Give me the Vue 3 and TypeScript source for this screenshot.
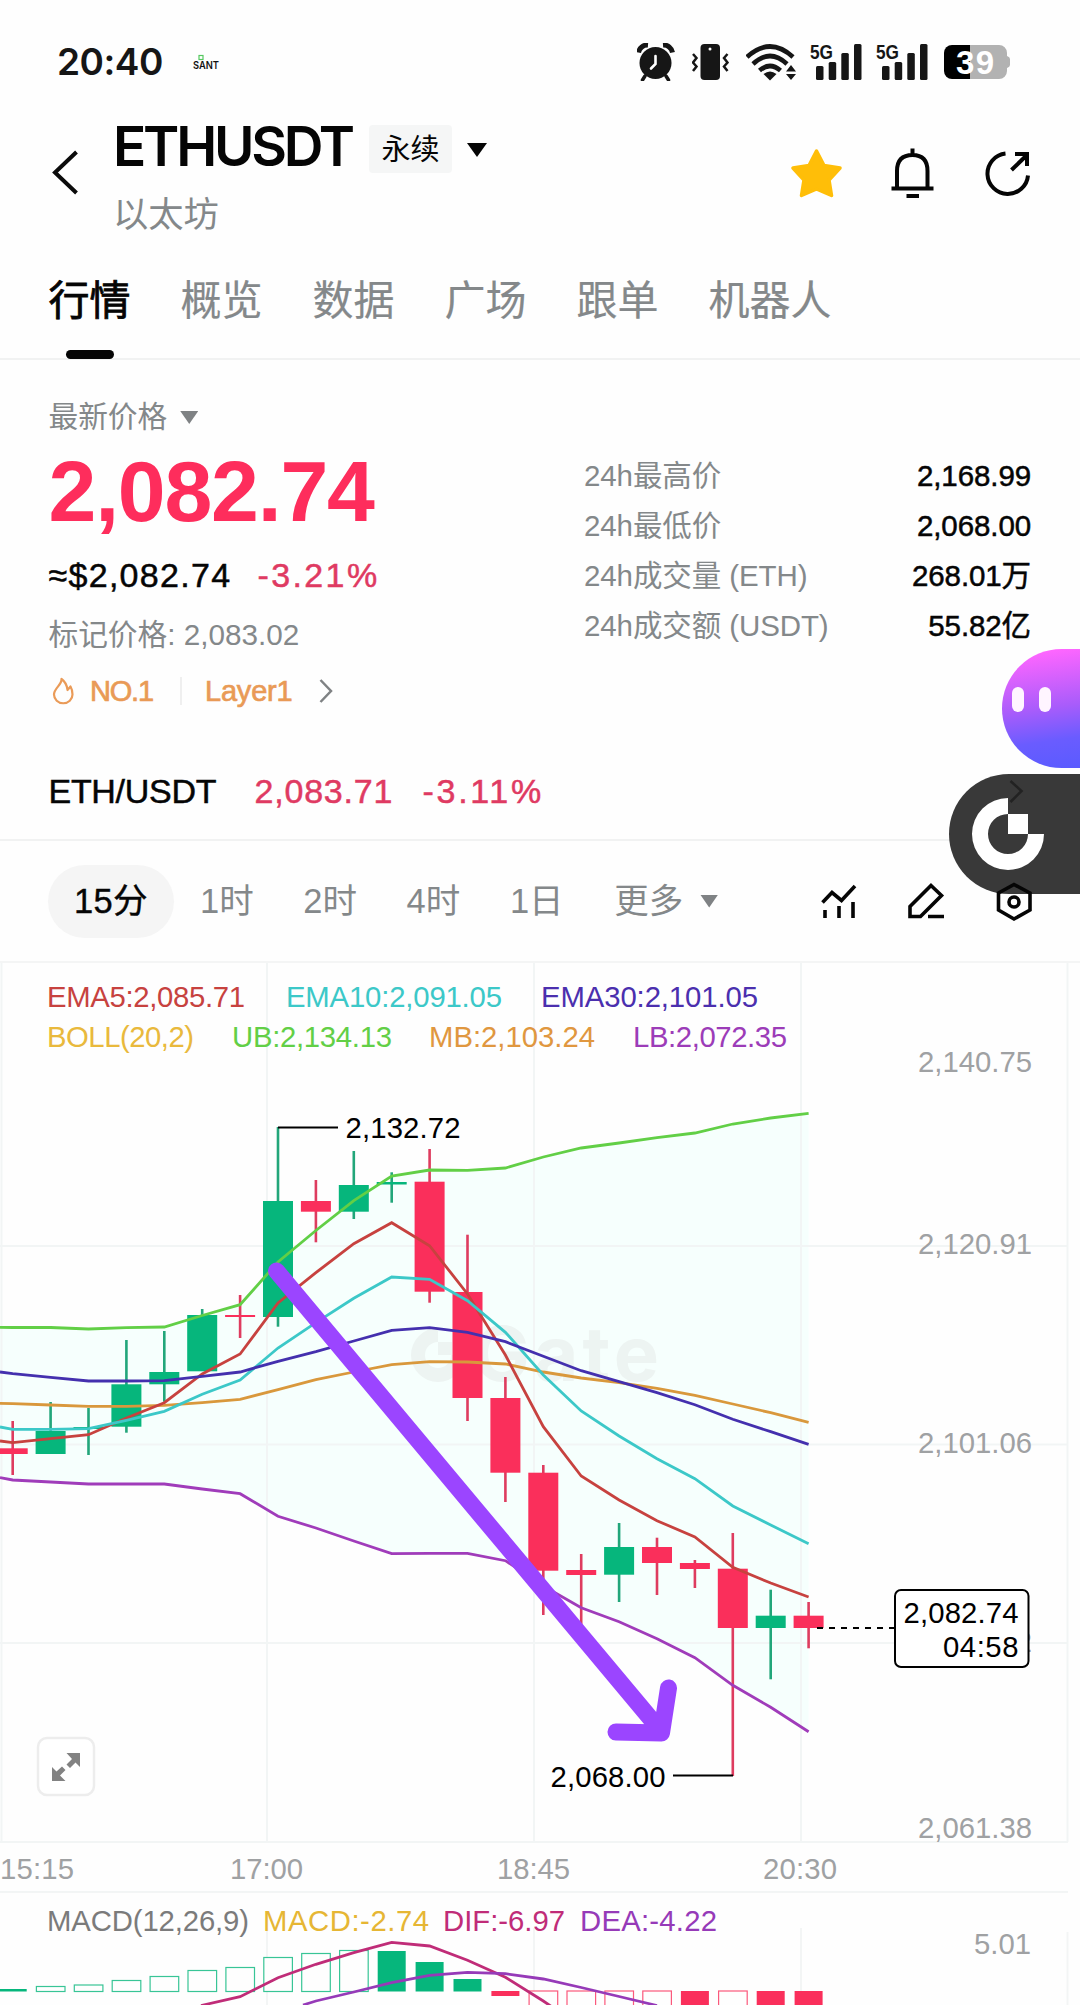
<script setup lang="ts">
interface Candle { up: boolean; top: number; bottom: number; high: number; low: number }
interface Label { text: string; x: number; y: number; w: number; color: string }

const X0 = 12.7
const STEP = 37.9
const cx = (i: number): number => X0 + STEP * i

const raw: [number, number, number, number, number][] = [
  [0, 1448.3, 1454, 1421, 1475],
  [1, 1431, 1454, 1402, 1454],
  [1, 1427, 1429, 1408, 1455],
  [1, 1384.3, 1426.7, 1340, 1432.7],
  [1, 1372, 1384.3, 1331, 1401.7],
  [1, 1315, 1371.3, 1309, 1371],
  [0, 1315, 1317, 1295, 1338],
  [1, 1201, 1317, 1127, 1326.7],
  [0, 1201, 1211.7, 1180, 1242.3],
  [1, 1185, 1211.7, 1151, 1219],
  [1, 1182, 1184.5, 1172.3, 1202.7],
  [0, 1181.7, 1291.7, 1149, 1302.7],
  [0, 1292, 1398, 1234.7, 1421],
  [0, 1398, 1472.7, 1377, 1502],
  [0, 1472.7, 1570.7, 1465, 1615],
  [0, 1570, 1575, 1554, 1627],
  [1, 1547, 1574.7, 1523, 1602],
  [0, 1547, 1563, 1537.7, 1595],
  [0, 1563, 1569, 1560, 1588],
  [0, 1568.7, 1628, 1533, 1776],
  [1, 1615.7, 1628, 1589.7, 1679.3],
  [0, 1615.7, 1628, 1602, 1648.3],
]
const candles: Candle[] = raw.map(([u, top, bottom, high, low]) => ({ up: u === 1, top, bottom, high, low }))

// first value is the level at the left edge, the rest follow the candles
const ub = [1327.3, 1327.5, 1327.5, 1329, 1327.7, 1327, 1315.5, 1304.7, 1262, 1230.5, 1200.7, 1176, 1170, 1170.3, 1168, 1157, 1148, 1143, 1137.7, 1133, 1124, 1118, 1113.3]
const ema5 = [1441, 1442.7, 1438.7, 1434.7, 1418, 1402.7, 1374, 1354, 1303, 1272.7, 1243.7, 1222.7, 1245.7, 1294, 1355, 1426.7, 1476, 1500, 1520.7, 1537, 1567.3, 1583, 1597]
const ema10 = [1427, 1429.3, 1429.3, 1428.7, 1420.3, 1411.3, 1394.3, 1380, 1348, 1322.7, 1298.3, 1277, 1279.3, 1300.7, 1332.3, 1375, 1411, 1436, 1458.7, 1478.7, 1506, 1525, 1543.7]
const ema30 = [1372, 1373.7, 1377.3, 1381, 1381, 1380.7, 1376.3, 1372, 1361.3, 1351.7, 1341, 1330.3, 1327.7, 1332.3, 1341.7, 1356.3, 1370.7, 1381.7, 1392.7, 1404.7, 1419.3, 1431.7, 1444.3]
const mb = [1403.3, 1403.7, 1405, 1406.3, 1406.3, 1405.3, 1402.7, 1399.3, 1389.7, 1379.7, 1372, 1364.7, 1361.7, 1362, 1364, 1372, 1378, 1382.7, 1388.3, 1395.3, 1404, 1412.7, 1422.3]
const lb = [1477.7, 1480, 1482, 1484, 1484, 1484, 1489, 1493.7, 1516.3, 1528, 1541, 1553.7, 1553.3, 1553.3, 1560.7, 1586, 1607.7, 1621.7, 1638.7, 1657.7, 1685.3, 1707.3, 1731.7]

const toPoints = (v: number[]): string[] => v.map((y, i) => `${i === 0 ? 0 : cx(i - 1).toFixed(1)},${y}`)
const band = [...toPoints(ub), ...toPoints(lb).reverse()].join(' ')
const lines = [
  { color: '#a03cba', pts: toPoints(lb).join(' ') },
  { color: '#d9983c', pts: toPoints(mb).join(' ') },
  { color: '#62cf46', pts: toPoints(ub).join(' ') },
  { color: '#c7423f', pts: toPoints(ema5).join(' ') },
  { color: '#3cc8c8', pts: toPoints(ema10).join(' ') },
  { color: '#4430ae', pts: toPoints(ema30).join(' ') },
]

const labels: Label[] = [
  { text: 'EMA5:2,085.71', x: 47, y: 1007, w: 198, color: '#c7423f' },
  { text: 'EMA10:2,091.05', x: 286, y: 1007, w: 216, color: '#3cc8c8' },
  { text: 'EMA30:2,101.05', x: 541, y: 1007, w: 217, color: '#4b2fae' },
  { text: 'BOLL(20,2)', x: 47, y: 1047, w: 147, color: '#e9b93c' },
  { text: 'UB:2,134.13', x: 232, y: 1047, w: 160, color: '#62cf46' },
  { text: 'MB:2,103.24', x: 429, y: 1047, w: 166, color: '#e0973f' },
  { text: 'LB:2,072.35', x: 633, y: 1047, w: 154, color: '#9c3cb8' },
  { text: '2,140.75', x: 918, y: 1072, w: 114, color: '#9fa1a3' },
  { text: '2,120.91', x: 918, y: 1254, w: 114, color: '#9fa1a3' },
  { text: '2,101.06', x: 918, y: 1453, w: 114, color: '#9fa1a3' },
  { text: '2,081.22', x: 918, y: 1652, w: 114, color: '#9fa1a3' },
  { text: '2,061.38', x: 918, y: 1838, w: 114, color: '#9fa1a3' },
  { text: '2,132.72', x: 345.5, y: 1138, w: 115, color: '#000' },
  { text: '2,068.00', x: 550.5, y: 1787, w: 115, color: '#000' },
  { text: '15:15', x: 0, y: 1879, w: 74, color: '#9fa1a3' },
  { text: '17:00', x: 230, y: 1879, w: 73, color: '#9fa1a3' },
  { text: '18:45', x: 497, y: 1879, w: 73, color: '#9fa1a3' },
  { text: '20:30', x: 763, y: 1879, w: 74, color: '#9fa1a3' },
]
const macdLabels: Label[] = [
  { text: 'MACD(12,26,9)', x: 47, y: 1931, w: 202, color: '#7b7b7b' },
  { text: 'MACD:-2.74', x: 263, y: 1931, w: 166, color: '#e6b634' },
  { text: 'DIF:-6.97', x: 443, y: 1931, w: 122, color: '#c02c78' },
  { text: 'DEA:-4.22', x: 580, y: 1931, w: 137, color: '#963ab8' },
  { text: '5.01', x: 974, y: 1954, w: 57, color: '#9fa1a3' },
]

const hist = [1989, 1986.5, 1985, 1980.5, 1976.5, 1970.5, 1967.5, 1957.5, 1953.5, 1950.5, 1951, 1962, 1979].map((top, i) => ({
  x: cx(i), top, h: 1991.5 - top, solid: i === 0 || i > 9, color: '#06b67c',
}))
const neg = [5, 30, 30, 30, 30, 30, 30, 30, 30].map((h, i) => ({
  x: cx(i + 13), top: 1991, h, solid: [0, 5, 7, 8].includes(i), color: '#fa2f5b',
}))
const bars = [...hist, ...neg]
const dif = `201,2005.5 ${[1996.7, 1977.7, 1964.3, 1952.7, 1942.3, 1946, 1960.3, 1977.3, 2001].map((y, i) => `${cx(i + 6)},${y}`).join(' ')} 555,2009`
const dea = `303,2005 ${[2001, 1992, 1982.7, 1975.3, 1972.3, 1973.7, 1979, 1987.5, 1996.5, 2005.5].map((y, i) => `${cx(i + 8)},${y}`).join(' ')}`

const tabs = ['行情', '概览', '数据', '广场', '跟单', '机器人']
const stats = [
  ['24h最高价', '2,168.99'],
  ['24h最低价', '2,068.00'],
  ['24h成交量 (ETH)', '268.01万'],
  ['24h成交额 (USDT)', '55.82亿'],
]
const frames = ['1时', '2时', '4时', '1日']
</script>

<template>
  <div class="screen">
    <div class="status">
      <span class="clock">20:40</span>
      <svg class="sant" width="28" height="16" viewBox="193 54 28 16">
        <rect x="199" y="55.500" width="4" height="4" stroke="#55c860" stroke-width="1.200" fill="none" />
        <text x="193" y="69" class="brand" textLength="26" lengthAdjust="spacingAndGlyphs">SANT</text>
      </svg>
      <div class="sys">
        <svg width="38" height="38" viewBox="637 43 38 38">
          <circle cx="655.500" cy="63" r="16" fill="#161616" />
          <path d="M638.500 52.500A9 9 0 0 1 648 45M663 45A9 9 0 0 1 672.500 52.500" stroke="#161616" stroke-width="5" fill="none" />
          <path d="M645 76L642.500 80M666 76L668.500 80" stroke="#161616" stroke-width="3.500" stroke-linecap="round" />
          <path d="M655.500 56V64L651 68.500" stroke="#fff" stroke-width="2.600" fill="none" stroke-linecap="round" />
        </svg>
        <svg class="g17" width="37" height="38" viewBox="692 43 37 38">
          <rect x="700.500" y="44" width="19.500" height="36" rx="4" fill="#161616" />
          <circle cx="710" cy="49" r="1.500" fill="#fff" />
          <path d="M693 54L696.500 58L693 62.500L696.500 66.500L693 71M727.500 54L724 58L727.500 62.500L724 66.500L727.500 71" fill="none" stroke="#161616" stroke-width="2.500" />
        </svg>
        <svg class="g17" width="51" height="38" viewBox="746 43 51 38" fill="none" stroke="#161616" stroke-width="4.600">
          <path d="M747 57Q770 36 793 57M753 64Q770 48 787 64M759.500 70.500Q770 61.500 780.500 70.500" />
          <path d="M763.500 74Q770 69 776.500 74L770 80.500Z" fill="#161616" stroke="none" />
          <path d="M786 71.500L791 65L796 71.500ZM786 74L791 80L796 74Z" fill="#161616" stroke="none" />
        </svg>
        <svg v-for="n in 2" :key="n" class="g13" width="53" height="42" viewBox="810 41 53 42" fill="#161616">
          <text x="810" y="59" class="five" textLength="23" lengthAdjust="spacingAndGlyphs">5G</text>
          <rect x="816" y="66" width="7.500" height="14" rx="1.500" />
          <rect x="828.700" y="62" width="7.500" height="18" rx="1.500" />
          <rect x="841.300" y="53" width="7.500" height="27" rx="1.500" />
          <rect x="854" y="44" width="7.500" height="36" rx="1.500" />
        </svg>
        <svg class="g15" width="66" height="36" viewBox="944 45 66 36">
          <path d="M970 46H999A8 8 0 0 1 1007 54V57Q1010 58 1010 60V66Q1010 68 1007 69V72A8 8 0 0 1 999 80H970Z" fill="#b2b2b2" />
          <path d="M970 46H952A8 8 0 0 0 944 54V72A8 8 0 0 0 952 80H970Z" fill="#000" />
          <text x="956" y="75" class="pct" textLength="38">39</text>
        </svg>
      </div>
    </div>

    <header class="head">
      <svg class="back" width="28" height="48" viewBox="52 148 28 48" fill="none" stroke="#0b0b0b" stroke-width="4"><path d="M76.500 152L55 172.500L76.500 193" /></svg>
      <div class="names">
        <div class="title"><span class="pair">ETHUSDT</span><span class="perp">永续</span><i class="tri dark"></i></div>
        <div class="sub">以太坊</div>
      </div>
      <div class="acts">
        <svg width="51" height="50" viewBox="790.500 148 51 50"><path d="M816 151L823.500 165.500L839.500 168L828.500 180L831 195.500L816 189L801 195.500L803.500 180L792.500 168L808.500 165.500Z" fill="#ffbe08" stroke="#ffbe08" stroke-width="3.500" stroke-linejoin="round" /></svg>
        <svg class="bell" width="43" height="52" viewBox="890.500 147 43 52" fill="none" stroke="#050505" stroke-width="4"><path d="M896.500 187V170Q896.500 154 912 154Q927 154 927 170V187M891 187.500H933M912 147.500V154M906 195H918.500" /></svg>
        <svg class="share" width="46" height="48" viewBox="985 149 46 48" fill="none" stroke="#050505" stroke-width="4"><path d="M1005.500 154.500A20.300 20.300 0 1 0 1028 176.500M1011.500 171L1027 156M1015 155H1027V167" /></svg>
      </div>
    </header>

    <nav class="tabs">
      <span v-for="(t, i) in tabs" :key="t" :class="{ on: i === 0 }">{{ t }}</span>
    </nav>

    <section class="summary">
      <div class="cols">
        <div class="left">
          <div class="latest">最新价格<i class="tri"></i></div>
          <div class="price">2,082.74</div>
          <div class="usd"><span>≈$2,082.74</span><span class="red">-3.21%</span></div>
          <div class="mark">标记价格: 2,083.02</div>
          <div class="rank">
            <svg width="22" height="28" viewBox="52 677 22 28" fill="none" stroke="#ea9b58" stroke-width="2.200" stroke-linejoin="round"><path d="M61.500 679C62 685 54 688 54 694.500A9 8.500 0 0 0 72.500 694.500C72.500 691 72 689 70.500 686.500L67.500 690C67 685 65 681.500 61.500 679Z" /></svg>
            <span class="no">NO.1</span><i class="sep"></i><span class="layer">Layer1</span>
            <svg class="chev" width="14" height="26" viewBox="319 678 14 26" fill="none" stroke="#7f8284" stroke-width="2.500"><path d="M320.500 680L331 691L320.500 702" /></svg>
          </div>
        </div>
        <div class="right">
          <div v-for="s in stats" :key="s[0]" class="stat"><span>{{ s[0] }}</span><b>{{ s[1] }}</b></div>
        </div>
      </div>
      <div class="spot"><span class="sp1">ETH/USDT</span><span class="sp2">2,083.71</span><span class="sp3">-3.11%</span></div>
    </section>

    <div class="toolbar">
      <span class="pill">15分</span>
      <span v-for="f in frames" :key="f" class="frame">{{ f }}</span>
      <span class="more">更多<i class="tri"></i></span>
      <div class="tools">
        <svg width="36" height="40" viewBox="822 882 36 40" fill="none" stroke="#050505" stroke-width="3.600"><path d="M823.500 902.500L833 892.500L842.500 900.500L856 886M826 910V918M840 906V918M854 902V918" /></svg>
        <svg width="38" height="40" viewBox="908 882 38 40" fill="none" stroke="#050505" stroke-width="3.600"><path d="M932 885.500L942.500 895.500L921.500 916.500H911V906.500ZM929 916.500H945" /></svg>
        <svg width="38" height="40" viewBox="995 882 38 40" fill="none" stroke="#050505" stroke-width="3.600"><path d="M1014 884.500L1030 893V910L1014 919L998.500 910V893Z" /><circle cx="1014" cy="902" r="5" /></svg>
      </div>
    </div>

    <svg class="chart" width="1080" height="929" viewBox="0 963 1080 929">
      <polygon :points="band" fill="#f6fffd" />
      <g fill="#edf4f2">
        <path d="M438 1328A27 27 0 1 0 465 1355H451A13 13 0 1 1 438 1342Z" />
        <rect x="438" y="1342" width="14" height="13" />
        <text x="473" y="1381" class="gate" textLength="186">Gate</text>
      </g>
      <g stroke="#f2f5f5" stroke-width="2">
        <path d="M1.500 963V1842M267 963V1842M534 963V1842M801 963V1842M1067.500 963V1842" />
        <path d="M0 1246H1068M0 1444.500H1068M0 1643H1068M0 1842H1068M0 1892H1068" />
      </g>
      <g v-for="(c, i) in candles" :key="i" :fill="c.up ? '#06b67c' : '#fa2f5b'">
        <rect :x="cx(i) - 1.3" :y="c.high" width="2.6" :height="c.low - c.high" :fill="c.up ? '#22a67a' : '#de3c5f'" />
        <rect :x="cx(i) - 15" :y="c.top" width="30" :height="c.bottom - c.top" />
      </g>
      <polyline v-for="l in lines" :key="l.color" :points="l.pts" :stroke="l.color" fill="none" stroke-width="2.800" />
      <path d="M278 1127.500H338M673 1775.500H733" stroke="#000" stroke-width="2" />
      <path d="M817 1628H894" stroke="#000" stroke-width="2" stroke-dasharray="6 6" />
      <text v-for="l in labels" :key="l.text" :x="l.x" :y="l.y" :fill="l.color" :textLength="l.w" class="lab">{{ l.text }}</text>
      <g>
        <rect x="895" y="1590" width="133.500" height="77" rx="6" fill="#fff" stroke="#000" stroke-width="2" />
        <text x="903.500" y="1623" class="lab" textLength="115">2,082.74</text>
        <text x="943" y="1657" class="lab" textLength="75.500">04:58</text>
      </g>
      <path d="M276.500 1271L661 1731M616 1732L661.500 1733L668.500 1688" fill="none" stroke="#9b45ff" stroke-width="17" stroke-linecap="round" stroke-linejoin="round" />
      <g>
        <rect x="38" y="1738" width="56" height="57" rx="9" fill="#fff" stroke="#ededed" stroke-width="2.500" />
        <path d="M66.500 1753H80V1767L75.500 1762.500L70 1768L66.500 1764.500L72 1759ZM65.500 1781H52V1767L56.500 1771.500L62 1766.500L65.500 1770L60 1775.500Z" fill="#828282" />
      </g>
    </svg>

    <svg class="chart" width="1080" height="113" viewBox="0 1892 1080 113">
      <path d="M0 1892H1068M267 1928V2005M534 1928V2005M801 1928V2005M1067.500 1932V2005" stroke="#f3f5f5" stroke-width="2" />
      <g v-for="(b, i) in bars" :key="i">
        <rect v-if="b.solid" :x="b.x - 14" :y="b.top" width="28" :height="b.h" :fill="b.color" />
        <rect v-else :x="b.x - 14.2" :y="b.top" width="28.600" :height="b.h" fill="#fefefe" :stroke="b.color" stroke-width="1.2" stroke-opacity=".8" />
      </g>
      <polyline :points="dif" fill="none" stroke="#c02c78" stroke-width="2.800" />
      <polyline :points="dea" fill="none" stroke="#963ab8" stroke-width="2.800" />
      <text v-for="l in macdLabels" :key="l.text" :x="l.x" :y="l.y" :fill="l.color" :textLength="l.w" class="lab">{{ l.text }}</text>
    </svg>

    <div class="bot"><i></i><i></i></div>
    <div class="float">
      <svg width="131" height="120" viewBox="949 774 131 120">
        <path d="M1010.500 781L1021.500 791L1010.500 802" fill="none" stroke="#222" stroke-width="2.500" />
        <path d="M1008 798A36 36 0 1 0 1044 834H1028A20 20 0 1 1 1008 814Z" fill="#fff" />
        <rect x="1008" y="814" width="20" height="20" fill="#fff" />
      </svg>
    </div>
  </div>
</template>

<style>
body { margin: 0; background: #fefefe; }
</style>

<style scoped>
.screen { position: relative; width: 1080px; height: 2005px; overflow: hidden; background: #fefefe; color: #050505; font-family: "Liberation Sans", "Noto Sans CJK SC", sans-serif; }
svg { display: block; flex: none; }
.status { box-sizing: border-box; height: 98px; padding: 26px 70px 0 57px; display: flex; align-items: center; }
.clock { font: 600 37px/40px Inter, sans-serif; color: #161616; letter-spacing: -0.5px; width: 136px; }
.brand { font: 600 10.500px Inter, sans-serif; fill: #111; }
.sys { margin-left: auto; display: flex; align-items: center; }
.g17 { margin-left: 17px; }
.g13 { margin-left: 13px; }
.g15 { margin-left: 15px; }
.five { font: 700 21px "Liberation Sans", sans-serif; }
.pct { font: 700 33px "Liberation Sans", sans-serif; fill: #fff; }
.head { height: 150px; display: flex; padding-right: 49px; }
.back { margin: 50px 0 0 52px; }
.names { margin: 18px 0 0 33px; }
.title { display: flex; align-items: center; height: 60px; }
.pair { font: 600 55px/60px Inter, sans-serif; letter-spacing: -3.2px; width: 256px; white-space: nowrap; }
.perp { width: 83px; height: 48px; line-height: 50px; margin-top: 6px; border-radius: 4px; background: #f5f6f6; text-align: center; font-size: 29px; }
.tri { display: inline-block; width: 18px; height: 13px; background: #7f8284; clip-path: polygon(0 0, 100% 0, 50% 100%); }
.tri.dark { width: 20px; height: 14px; background: #050505; margin: 8px 0 0 15px; }
.sub { margin-top: 19px; font-size: 35.3px; line-height: 40px; color: #84888a; }
.acts { margin-left: auto; display: flex; padding-top: 50px; }
.bell { margin-left: 49px; }
.share { margin-left: 51px; }
.tabs { height: 112px; box-sizing: border-box; border-bottom: 2px solid #f1f2f2; padding: 25px 0 0 48.5px; display: flex; gap: 50px; font-size: 41px; line-height: 56px; color: #84888a; -webkit-text-stroke: 0.2px; }
.tabs .on { color: #050505; -webkit-text-stroke: 0.8px; position: relative; }
.tabs .on::after { content: ""; position: absolute; left: 17px; top: 77px; width: 48px; height: 9px; border-radius: 5px; background: #050505; }
.summary { height: 481px; box-sizing: border-box; padding: 37px 49px 0 48.5px; border-bottom: 2px solid #f1f2f2; }
.cols { display: flex; height: 314px; }
.left { width: 535.5px; }
.latest { font-size: 29.7px; line-height: 40px; color: #84888a; }
.latest .tri { margin-left: 13px; vertical-align: 3px; }
.price { margin-top: 14px; font-size: 86px; line-height: 80px; font-weight: 700; color: #fe2d5c; letter-spacing: -1.2px; }
.usd { margin-top: 24px; display: flex; font-size: 34px; line-height: 40px; letter-spacing: 1.3px; -webkit-text-stroke: 0.5px; }
.usd .red { margin-left: 26px; letter-spacing: 2.4px; }
.red, .sp2, .sp3 { color: #df3a62; }
.mark { margin-top: 20px; font-size: 29.7px; line-height: 40px; color: #84888a; }
.rank { margin-top: 16px; display: flex; align-items: center; height: 40px; padding-left: 3.5px; font-size: 29px; color: #e99a56; -webkit-text-stroke: 0.7px; }
.no { margin-left: 16px; width: 90px; letter-spacing: -1.2px; }
.sep { width: 2px; height: 28px; background: #efefef; }
.layer { margin-left: 23px; width: 114px; letter-spacing: -0.2px; }
.right { flex: 1; padding-top: 54px; }
.stat { display: flex; justify-content: space-between; font-size: 29.5px; line-height: 50px; color: #84888a; letter-spacing: -0.1px; }
.stat b { font-weight: 400; color: #050505; -webkit-text-stroke: 0.5px; }
.spot { margin-top: 60px; display: flex; font-size: 34px; line-height: 40px; -webkit-text-stroke: 0.5px; }
.sp1 { width: 206px; letter-spacing: -0.3px; }
.sp2 { width: 168px; letter-spacing: 0.8px; }
.sp3 { letter-spacing: 2.7px; }
.toolbar { height: 122px; box-sizing: border-box; border-bottom: 2px solid #f4f5f5; padding: 0 47px 0 48px; display: flex; align-items: center; font-size: 34.5px; color: #84888a; }
.pill { width: 126px; height: 73px; line-height: 73px; border-radius: 37px; background: #f5f5f5; text-align: center; color: #050505; -webkit-text-stroke: 0.4px; letter-spacing: 0.3px; }
.frame { width: 103.300px; box-sizing: border-box; padding-left: 26px; white-space: nowrap; line-height: 73px; }
.more { margin-left: 27px; white-space: nowrap; line-height: 73px; }
.more .tri { margin-left: 17px; vertical-align: 5px; }
.tools { margin-left: auto; display: flex; gap: 50px; position: relative; z-index: 3; padding-top: 2px; }
.lab { font: 400 29.300px "Liberation Sans", sans-serif; }
.gate { font: 700 76px Inter, sans-serif; }
.bot { position: absolute; left: 1002px; top: 649px; width: 78px; height: 119px; border-radius: 60px 0 0 60px; background: linear-gradient(172deg, #ff66ff 6%, #a95cfb 50%, #6a5cff 76%, #5a5bff 100%); }
.bot i { position: absolute; left: 10px; top: 38px; width: 12px; height: 25px; border-radius: 6px; background: #fff5ff; }
.bot i + i { left: 37px; }
.float { position: absolute; left: 949px; top: 774px; width: 131px; height: 120px; border-radius: 60px 0 0 60px; background: #393939; }
</style>
